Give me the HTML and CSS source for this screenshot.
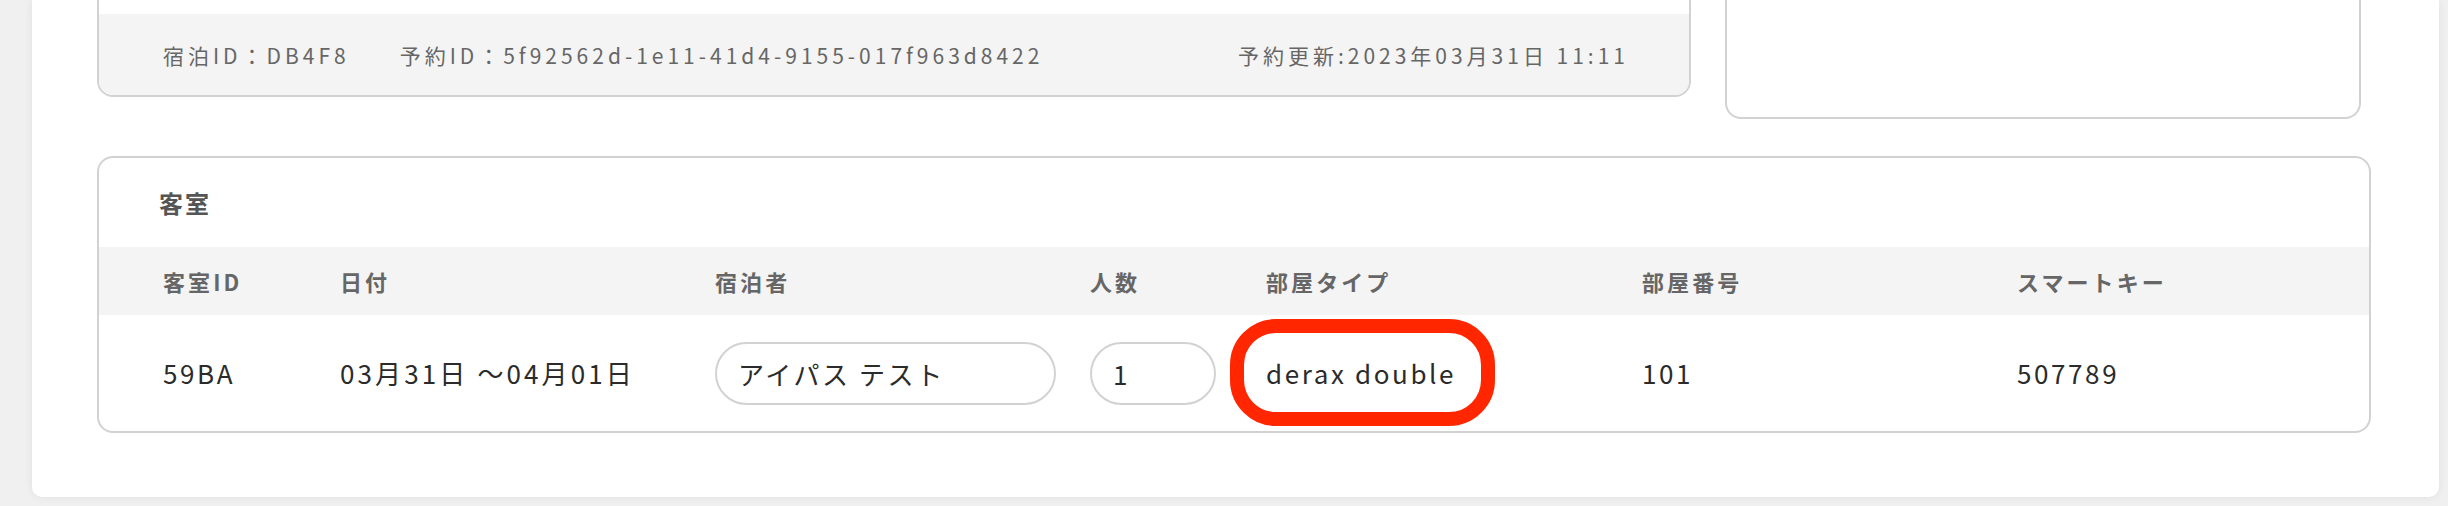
FILE: index.html
```html
<!DOCTYPE html>
<html lang="ja">
<head>
  <meta charset="utf-8">
  <title>予約詳細</title>
  <link rel="stylesheet" href="styles.css">
</head>
<body>
  <div class="panel">
    <div class="top-row">
      <div class="card card-info">
        <div class="card-body"></div>
        <div class="card-foot">
          <div class="foot-ids">
            <span>宿泊ID：DB4F8</span>
            <span>予約ID：5f92562d-1e11-41d4-9155-017f963d8422</span>
          </div>
          <span>予約更新:2023年03月31日 11:11</span>
        </div>
      </div>
      <div class="card card-side"></div>
    </div>

    <div class="card card-rooms">
      <h2 class="card-title">客室</h2>
      <div class="room-table">
        <div class="room-row room-head">
          <div>客室ID</div>
          <div>日付</div>
          <div>宿泊者</div>
          <div>人数</div>
          <div>部屋タイプ</div>
          <div>部屋番号</div>
          <div>スマートキー</div>
        </div>
        <div class="room-row room-data">
          <div>59BA</div>
          <div class="date-cell">03月31日 〜04月01日</div>
          <div><input class="pill-input guest-input" type="text" value="アイパス テスト"></div>
          <div><input class="pill-input count-input" type="text" value="1"></div>
          <div><span class="highlight">derax double</span></div>
          <div>101</div>
          <div>507789</div>
        </div>
      </div>
    </div>
  </div>
</body>
</html>
```

FILE: styles.css
```css
body {
  margin: 0;
  padding: 0;
  background-color: #f0f0f0;
  font-family: "Noto Sans CJK JP", "Noto Sans", sans-serif;
  color: #333333;
}

.panel {
  margin: 0 9px 9px 32px;
  padding: 0 68px 64px 65px;
  height: 433px;
  background-color: #ffffff;
  border-radius: 0 0 10px 10px;
  box-shadow: 0 0 10px rgba(0, 0, 0, 0.07);
}

.card {
  background-color: #ffffff;
  border: 2px solid #d2d2d2;
  border-radius: 16px;
  box-sizing: border-box;
  overflow: hidden;
}

/* top row: cut off by the top of the window */

.top-row {
  display: flex;
  align-items: flex-start;
  gap: 34px;
  margin-right: 10px;
  margin-bottom: 37px;
}

.card-info {
  width: 1594px;
  border-top: none;
  border-radius: 0 0 16px 16px;
}

.card-body {
  height: 14px;
}

.card-foot {
  display: flex;
  justify-content: space-between;
  align-items: center;
  height: 81px;
  padding: 0 60px 0 64px;
  background-color: #f4f4f4;
  font-size: 21px;
  letter-spacing: 0.19em;
  color: #666666;
}

.foot-ids {
  display: flex;
  gap: 50px;
}

.card-side {
  flex: 1;
  height: 119px;
  border-top: none;
  border-radius: 0 0 16px 16px;
}

/* rooms */

.card-title {
  margin: 0;
  height: 89px;
  padding-left: 60px;
  display: flex;
  align-items: center;
  font-size: 24px;
  font-weight: bold;
  letter-spacing: 0.08em;
  color: #555555;
}

.room-row {
  display: grid;
  grid-template-columns: 177px 375px 375px 176px 376px 375px 1fr;
  align-items: center;
  padding-left: 64px;
}

.room-head {
  height: 68px;
  background-color: #f4f4f4;
  font-size: 22px;
  font-weight: bold;
  letter-spacing: 0.14em;
  color: #666666;
}

.room-data {
  height: 116px;
  font-size: 26px;
  line-height: 40px;
  letter-spacing: 0.1em;
  color: #2b2b2b;
}

.date-cell {
  letter-spacing: 0.12em;
}

.pill-input {
  display: block;
  height: 63px;
  padding: 0 0 0 21px;
  border: 2px solid #d2d2d2;
  border-radius: 32px;
  box-sizing: border-box;
  background-color: #ffffff;
  font-family: inherit;
  font-size: 26px;
  letter-spacing: 0.1em;
  color: #2b2b2b;
  outline: none;
}

.guest-input {
  width: 341px;
}

.count-input {
  width: 126px;
}

/* red annotation drawn over the room type */
.highlight {
  position: relative;
  display: inline-block;
}

.highlight::before {
  content: "";
  position: absolute;
  left: -36px;
  right: -39px;
  top: -34px;
  bottom: -33px;
  border: 14px solid #ff2600;
  border-radius: 46px;
}
```
